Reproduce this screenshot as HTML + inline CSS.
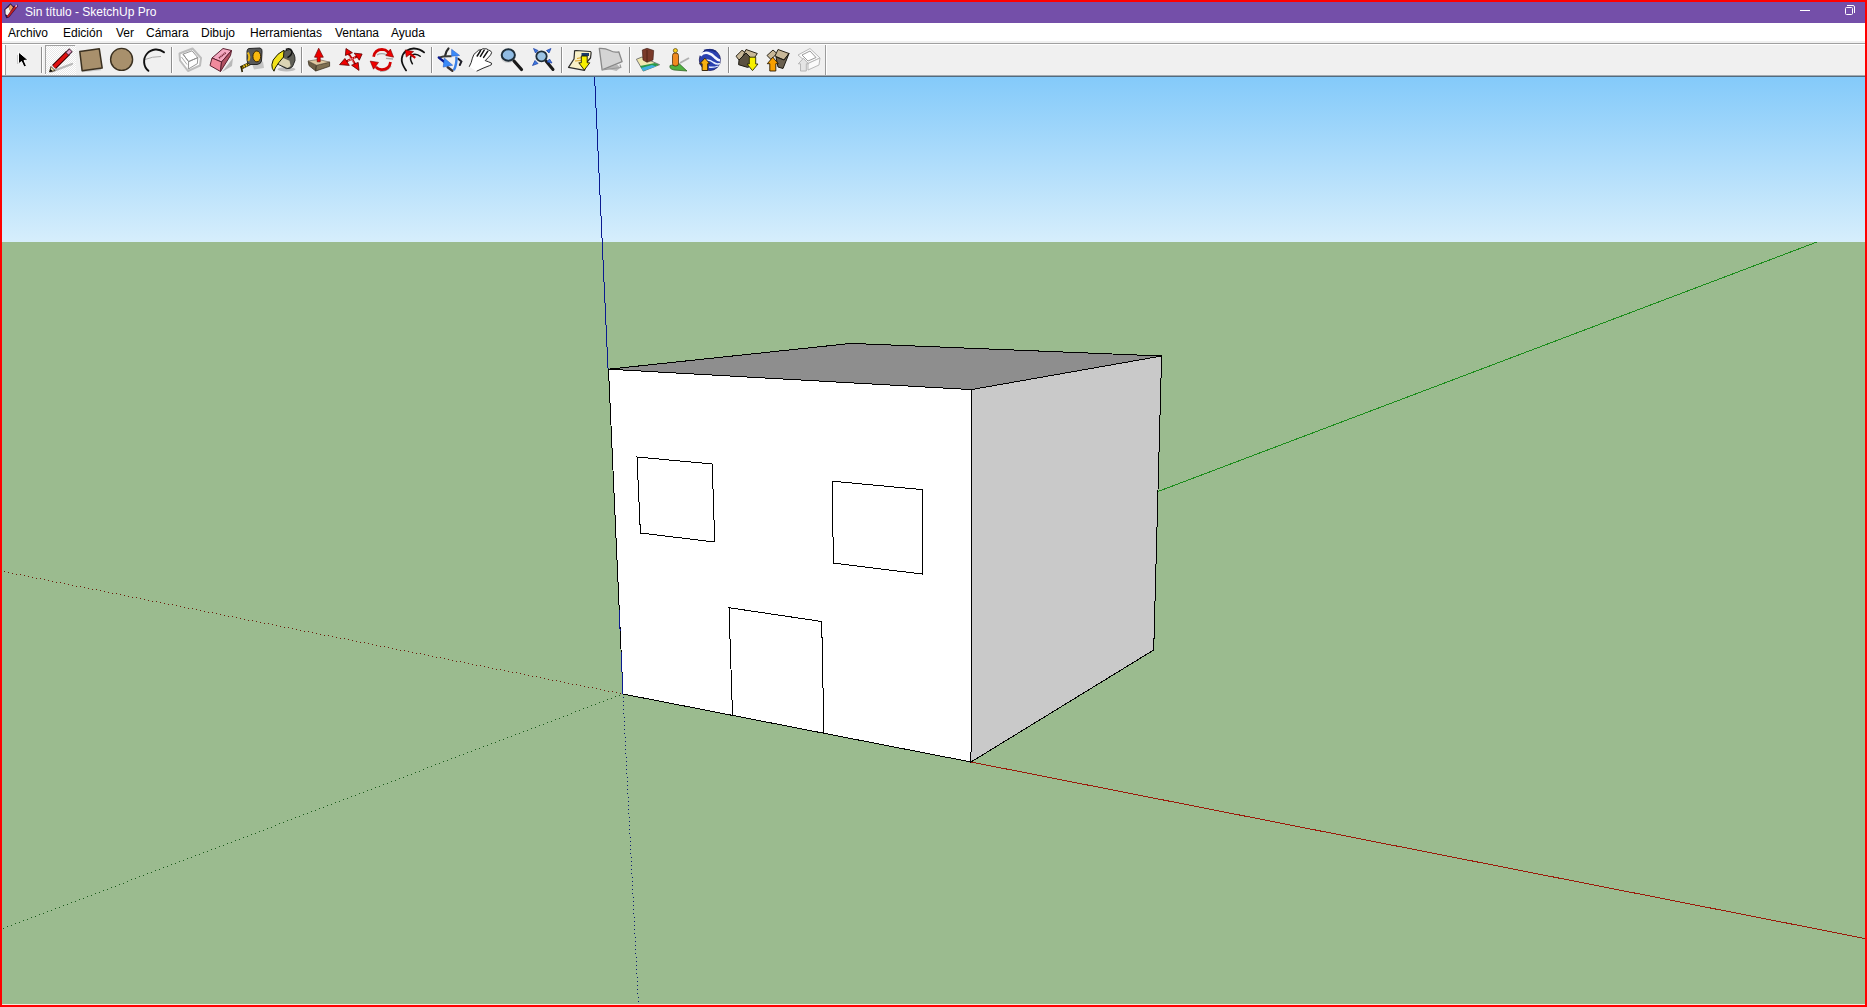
<!DOCTYPE html>
<html><head><meta charset="utf-8">
<style>
*{margin:0;padding:0;box-sizing:border-box}
html,body{width:1867px;height:1007px;overflow:hidden;background:#FF0000;font-family:"Liberation Sans",sans-serif}
.abs{position:absolute}
#title{left:2px;top:2px;width:1863px;height:21px;background:#744FA9}
#title .t{left:23px;top:3px;color:#fff;font-size:12px;white-space:nowrap}
#menu{left:2px;top:23px;width:1863px;height:22px;background:#fff}
#menu .m{top:3px;font-size:12px;color:#000;white-space:nowrap}
#tb{left:2px;top:45px;width:1863px;height:32px;background:#F0F0F0}
#vp{left:2px;top:77px;width:1863px;height:928px;background:#9BBB8F}
</style></head><body>
<div id="title" class="abs">
  <div class="t abs">Sin título - SketchUp Pro</div>
</div>
<svg class="abs" style="left:0;top:0" width="24" height="24" viewBox="0 0 24 24">
<path d="M10.5,3.3 L13.2,6.2 L17.5,4.6 L18,6.2 L9,17.6 L6.3,18.3 L4.8,14.5 L4.3,9.6 Z" fill="#2A1040"/>
<path d="M5.4,9.8 L8.6,6.9 L10.3,11.6 L7.6,15.6 L5.6,14.2 Z" fill="#F4F0EC"/>
<path d="M8.6,6.9 L10.5,4.4 L13,7.3 L10.3,11.6 Z" fill="#F0A060"/>
<path d="M16.6,5.6 L7.6,16.8" stroke="#C02020" stroke-width="2"/>
<path d="M16.8,5.2 L15.6,6.8" stroke="#F0C0E0" stroke-width="1.5"/>
</svg>
<svg class="abs" style="left:1790px;top:0" width="77" height="24" viewBox="1790 0 77 24" shape-rendering="crispEdges">
<rect x="1800" y="10" width="10" height="1" fill="#FFFFFF"/>
<rect x="1845.5" y="7.5" width="7" height="7" rx="1" fill="none" stroke="#FFFFFF" stroke-width="1" shape-rendering="auto"/>
<path d="M1847,5.5 L1853,5.5 Q1854.5,5.5 1854.5,7 L1854.5,13" fill="none" stroke="#FFFFFF" stroke-width="1" shape-rendering="auto"/>
</svg>
<div id="menu" class="abs">
  <div class="abs" style="left:0;top:18px;width:1863px;height:2px;background:#F0F0F0"></div>
  <div class="abs" style="left:0;top:20px;width:1863px;height:1px;background:#A0A0A0"></div>
  <div class="abs" style="left:0;top:21px;width:1863px;height:1px;background:#fff"></div>
  <div class="m abs" style="left:6px">Archivo</div>
  <div class="m abs" style="left:61px">Edición</div>
  <div class="m abs" style="left:114px">Ver</div>
  <div class="m abs" style="left:144px">Cámara</div>
  <div class="m abs" style="left:199px">Dibujo</div>
  <div class="m abs" style="left:248px">Herramientas</div>
  <div class="m abs" style="left:333px">Ventana</div>
  <div class="m abs" style="left:389px">Ayuda</div>
</div>
<div id="tb" class="abs">
  <div class="abs" style="left:0;top:30px;width:1863px;height:1px;background:#A3AAB0"></div>
  <div class="abs" style="left:0;top:31px;width:1863px;height:1px;background:#536B7E"></div>
</div>
<!-- TOOLBAR -->
<svg class="abs" style="left:0;top:0" width="840" height="77" viewBox="0 0 840 77">
<defs>
<pattern id="dith" width="2" height="2" patternUnits="userSpaceOnUse"><rect width="2" height="2" fill="#FFFFFF"/><rect width="1" height="1" fill="#E8E8E8"/><rect x="1" y="1" width="1" height="1" fill="#E8E8E8"/></pattern>
<linearGradient id="gsky" x1="0" y1="0" x2="0" y2="1"><stop offset="0" stop-color="#F8F2D0"/><stop offset="1" stop-color="#F0E0A0"/></linearGradient>
<radialGradient id="globe" cx="0.4" cy="0.35" r="0.7"><stop offset="0" stop-color="#6A9AF0"/><stop offset="1" stop-color="#0A2A8A"/></radialGradient>
</defs>
<!-- gripper + separators -->
<g shape-rendering="crispEdges">
<rect x="3" y="45" width="2" height="30" fill="#FFFFFF"/>
<rect x="5" y="45" width="1" height="30" fill="#9C9C9C"/>
<rect x="41" y="47" width="1" height="26" fill="#8E8E8E"/><rect x="42" y="47" width="1" height="26" fill="#FFFFFF"/>
<rect x="171" y="47" width="1" height="26" fill="#8E8E8E"/><rect x="172" y="47" width="1" height="26" fill="#FFFFFF"/>
<rect x="301" y="47" width="1" height="26" fill="#8E8E8E"/><rect x="302" y="47" width="1" height="26" fill="#FFFFFF"/>
<rect x="431" y="47" width="1" height="26" fill="#8E8E8E"/><rect x="432" y="47" width="1" height="26" fill="#FFFFFF"/>
<rect x="561" y="47" width="1" height="26" fill="#8E8E8E"/><rect x="562" y="47" width="1" height="26" fill="#FFFFFF"/>
<rect x="629" y="47" width="1" height="26" fill="#8E8E8E"/><rect x="630" y="47" width="1" height="26" fill="#FFFFFF"/>
<rect x="728" y="47" width="1" height="26" fill="#8E8E8E"/><rect x="729" y="47" width="1" height="26" fill="#FFFFFF"/>
<rect x="825" y="45" width="1" height="30" fill="#9C9C9C"/><rect x="826" y="45" width="1" height="30" fill="#FFFFFF"/>
<!-- pressed pencil button -->
<rect x="45" y="45" width="31" height="30" fill="url(#dith)"/>
<rect x="45" y="45" width="30" height="1" fill="#A0A0A0"/>
<rect x="45" y="45" width="1" height="29" fill="#A0A0A0"/>
</g>
<!-- select arrow -->
<path d="M18.5,52 L18.5,64 L21.5,61.5 L24,67 L26.5,66 L24,60.5 L28,60 Z" fill="#000" stroke="#FFF" stroke-width="1" stroke-linejoin="miter"/>
<path d="M17.5,55 L17.5,64 L19,62.5" fill="none" stroke="#C8C8C8" stroke-width="1"/>
<!-- pencil -->
<path d="M52,71.5 L72,64" stroke="#B8B8B8" stroke-width="2.2" stroke-linecap="round"/>
<path d="M54,67 L68,53" stroke="#3A0000" stroke-width="5.5"/>
<path d="M54,67 L68,53" stroke="#E01010" stroke-width="3.6"/>
<path d="M67,54 L71,50" stroke="#402030" stroke-width="5"/>
<path d="M67.5,53.5 L70.5,50.5" stroke="#E8A0C8" stroke-width="3"/>
<path d="M49.5,72 L51,66.5 L55,70.5 Z" fill="#F0E8B0" stroke="#302010" stroke-width="0.8"/>
<path d="M49.5,72 L50.4,69 L52.5,71 Z" fill="#000"/>
<!-- rectangle -->
<path d="M82,71.5 L101,69.5" stroke="#C8C8C8" stroke-width="1.5"/>
<path d="M79.8,51.5 L99.3,48.8 L102.2,68.1 L82.1,70.7 Z" fill="#A8906C" stroke="#3A3020" stroke-width="1.5" stroke-linejoin="round"/>
<!-- circle -->
<circle cx="121.6" cy="59.4" r="11" fill="#A8906C" stroke="#3A3020" stroke-width="1.4"/>
<!-- arc -->
<path d="M145,59.5 Q152,56.5 161,56.5" fill="none" stroke="#A0A0A0" stroke-width="0.9"/>
<path d="M164,52.3 A11.6,11.6 0 1 0 148.4,70.8" fill="none" stroke="#111" stroke-width="1.9" stroke-linecap="round"/>
<!-- component -->
<g fill="#FDFDFD" stroke="#BDBDBD" stroke-width="2" stroke-linejoin="round">
<path d="M179.5,53.5 L192.5,48.5 L201,58 L200,65.5 L188,71 L180,60.5 Z"/>
</g>
<g fill="none" stroke="#8A8A8A" stroke-width="0.9" stroke-linejoin="round">
<path d="M183,54.2 L192,50.8 L197.8,57.6 L188.6,61.6 Z" fill="#FFFFFF"/>
<path d="M183,54.2 L188.6,61.6 L188.4,69 M188.6,61.6 L197.8,57.6 L197.4,63.6 L188.4,69"/>
<path d="M181.5,57 L187,64.5" stroke="#A0A0A0"/>
</g>
<!-- eraser -->
<path d="M222,72 L233,58 L232,66 Z" fill="#B8B8B8"/>
<path d="M212,58 L223,48.5 L231.5,50.5 L221.5,62 Z" fill="#F4A8C0" stroke="#5A2030" stroke-width="1"/>
<path d="M212,58 L221.5,62 L220.5,71.5 L210,65.5 Z" fill="#F08A9C" stroke="#5A2030" stroke-width="1"/>
<path d="M221.5,62 L231.5,50.5 L230.5,55.5 L220.5,71.5 Z" fill="#B05060" stroke="#5A2030" stroke-width="1"/>
<path d="M219,58 L226,52.5" stroke="#7A2A3A" stroke-width="1.8" stroke-dasharray="1.2 0.6"/>
<!-- tape -->
<path d="M252,64 L263,61.5 L264,68 L254,69.5 Z" fill="#C4C4C4"/>
<path d="M241,67.8 L251,63" stroke="#2A2000" stroke-width="3.6"/>
<path d="M241,67.8 L251,63" stroke="#F0C818" stroke-width="2.4" stroke-dasharray="1.6 1"/>
<path d="M241,66 L242.3,72" stroke="#2A2000" stroke-width="1.6"/>
<path d="M249,48.5 L260,48 Q262.5,48.5 262,52 L261.5,61 Q261,64 257,64.5 L250,64.5 Q247,64 247,60 L247,51 Q247.5,48.5 249,48.5 Z" fill="#585858" stroke="#262626" stroke-width="1"/>
<ellipse cx="256.8" cy="56.4" rx="3.9" ry="5.4" fill="#F8B810" stroke="#2A1A00" stroke-width="0.9"/>
<path d="M247.8,52.5 Q250.5,56.5 248.3,61" fill="none" stroke="#E8B818" stroke-width="2"/>
<!-- paint bucket -->
<ellipse cx="286.5" cy="69.3" rx="9" ry="2.2" fill="#BDBDBD"/>
<path d="M282,52 L289.5,49.5 Q295.5,53 295,60.5 L292.5,66.5 Q290,69.2 286.5,68.6 L278.5,64.5 Z" fill="#5E5E56" stroke="#262624" stroke-width="1"/>
<path d="M278.8,62.3 L282.6,57.8 L289.5,60.8 L290.6,66 L287.6,68 L279.2,64.2 Z" fill="#DCD4B4"/>
<path d="M285.8,49.5 Q290.5,47.6 292,51.2 Q292.2,55 287.5,57.6" fill="none" stroke="#111" stroke-width="1.5"/>
<path d="M284,50.2 Q277.5,53.2 273.2,60 Q271,65 272.3,68.3 L274,71.2 L275.2,68 Q278,63 283.5,57 Z" fill="#F2E21C" stroke="#1A1A00" stroke-width="1"/>
<!-- push pull -->
<path d="M308.2,61 L316.5,65.2 L315.7,71 L309,65.6 Z" fill="#6E6046" stroke="#3A3020" stroke-width="0.8"/>
<path d="M316.5,65.2 L329.6,62.1 L329.6,66.3 L315.7,71 Z" fill="#7E7052" stroke="#3A3020" stroke-width="0.8"/>
<path d="M308.2,61 L318.4,59.4 L329.6,62.1 L316.5,65.2 Z" fill="#DEC8A0" stroke="#5A5040" stroke-width="0.6"/>
<path d="M318.7,48.2 L323.3,57.2 L320.2,57.2 L320.2,61.8 L317.2,61.8 L317.2,57.2 L314.5,57.2 Z" fill="#EE0000" stroke="#6A0000" stroke-width="0.7"/>
<!-- move -->
<path d="M348.8,54 L356,65.5 M346,61.5 L357,56.5" stroke="#C00000" stroke-width="2.2"/>
<path d="M349.5,56.5 L353.5,62.5 M348.5,60.5 L355,57.8" stroke="#FFFFFF" stroke-width="0.9" stroke-dasharray="1 1"/>
<g fill="#F00000" stroke="#5A0000" stroke-width="0.8" stroke-linejoin="round">
<path d="M346,48.5 L352.4,52.7 L345.4,55.4 Z"/>
<path d="M362.1,54 L359.3,60.2 L354.3,53.2 Z"/>
<path d="M359,70.4 L351.6,65.2 L358.2,62.4 Z"/>
<path d="M339.6,64.6 L344.9,58.5 L349.3,65.4 Z"/>
</g>
<!-- rotate -->
<path d="M377,54.8 Q382,52.3 386.5,54.8" fill="none" stroke="#A8A8A8" stroke-width="1.3"/>
<path d="M386,58.3 L393,59" fill="none" stroke="#A8A8A8" stroke-width="1.3"/>
<path d="M380,71.3 Q387,71.5 391,66" fill="none" stroke="#B0B0B0" stroke-width="1.3"/>
<path d="M373.6,56.8 Q374.8,49.6 382,49.4 Q385.5,49.4 388.3,52.3" fill="none" stroke="#D40000" stroke-width="2.7"/>
<path d="M390.4,49.1 L393.6,57.2 L385.8,55.5 Z" fill="#F00000" stroke="#700000" stroke-width="0.6"/>
<path d="M390.5,62 Q389.5,69.4 382,69.6 Q378.2,69.6 375.8,66.8" fill="none" stroke="#D40000" stroke-width="2.7"/>
<path d="M370.2,61.1 L378.5,62.4 L373.5,69.2 Z" fill="#F00000" stroke="#700000" stroke-width="0.6"/>
<!-- offset -->
<path d="M406.1,70.4 Q401,63 401.8,58.5 Q402.5,53.5 406,51 Q410,48.4 414,48.5 Q420,48.8 424.1,52.4" fill="none" stroke="#111" stroke-width="1.8" stroke-linecap="round"/>
<path d="M412.4,63.8 Q409.5,59 411,56.2 Q412.5,54 415,54.2 Q418,54.4 420.2,56.3" fill="none" stroke="#111" stroke-width="1.5" stroke-linecap="round"/>
<path d="M409.5,53.5 L415.3,57.8" stroke="#D00000" stroke-width="2.2"/>
<path d="M405.2,49.9 L413.6,51.6 L406.3,57.1 Z" fill="#F00000" stroke="#6A0000" stroke-width="0.6"/>
<!-- orbit -->
<path d="M448.5,48.5 Q446,51 445.2,55.5" fill="none" stroke="#2A2A2A" stroke-width="2.2" stroke-linecap="round"/>
<path d="M438.8,57.6 Q444,55.8 451.6,56.3" fill="none" stroke="#3A3A36" stroke-width="2"/>
<path d="M438.8,57.6 L444.5,62" fill="none" stroke="#0A1A90" stroke-width="2.4" stroke-linecap="round"/>
<path d="M458.2,58.8 L461.4,61.6 L459.8,65" fill="none" stroke="#202028" stroke-width="2" stroke-linecap="round"/>
<path d="M447.7,67.3 L452.4,70.8" fill="none" stroke="#3A3232" stroke-width="2.4" stroke-linecap="round"/>
<path d="M456.4,56.5 Q457,64 453.8,70.2" fill="none" stroke="#3A80E8" stroke-width="2.4"/>
<path d="M444.3,58 L443.2,67.1 L452.7,65.2 Z" fill="#3A8AF8" stroke="#1A50C0" stroke-width="0.5"/>
<path d="M451.6,49.3 L459.6,55.4 L451.6,56.2 Z" fill="#3A8AF8" stroke="#1A50C0" stroke-width="0.5"/>
<!-- pan hand -->
<path d="M469.2,66.8 Q471.6,62.5 472.4,58.2 Q473.4,53.6 476.6,52 Q478.6,49.4 481,49.8 Q482.8,48.2 484.8,48.8 Q487,48.4 488.4,50 Q490.8,50.2 491.6,52.6 Q491.2,54.8 488.6,57.2 L485.2,60.6 Q488.4,61.6 491.6,63.2 Q492,65.2 489.6,65.6 Q483,68 476.6,71.2 Z" fill="#FFFFFF"/>
<path d="M469.2,66.8 Q471.6,62.5 472.4,58.2 Q473.4,53.6 476.6,52 Q478.6,49.4 481,49.8 Q482.8,48.2 484.8,48.8 Q487,48.4 488.4,50 Q490.8,50.2 491.6,52.6 Q491.2,54.8 488.6,57.2 L485.2,60.6 Q488.4,61.6 491.6,63.2 Q492,65.2 489.6,65.6 Q483,68 476.6,71.2" fill="none" stroke="#111" stroke-width="0.9" stroke-linejoin="round"/>
<path d="M477.2,56 L480.6,50.6 M480.4,56.4 L484.2,50.2 M483.6,57.4 L487.8,51.2" stroke="#111" stroke-width="1.5" stroke-linecap="round"/>
<!-- zoom -->
<ellipse cx="508" cy="59" rx="6.5" ry="4" fill="#C8C8C8" opacity="0.7"/>
<path d="M514,61 L521.5,69.5" stroke="#1A1A1A" stroke-width="3.2" stroke-linecap="round"/>
<ellipse cx="508.3" cy="55" rx="6.6" ry="5.8" fill="#90BCE4" stroke="#1E2E3A" stroke-width="2"/>
<!-- zoom extents -->
<path d="M546,61 L553,69.5" stroke="#1A1A1A" stroke-width="3" stroke-linecap="round"/>
<ellipse cx="541.5" cy="56.3" rx="5.2" ry="5" fill="#9CC4E4" stroke="#1E2E3A" stroke-width="1.8"/>
<path d="M533.5,48.5 L538,50.5 L535.5,53 Z M551,48.5 L546.5,50.5 L549,53 Z M532.5,65.5 L535,60.5 L538,63.5 Z M552,63 L549.5,59 L547,62 Z" fill="#3A7AE0" stroke="#1A3AA0" stroke-width="0.7"/>
<!-- photo texture -->
<path d="M574.6,51.3 Q574,50.5 576,50.5 L590.5,51.5 Q591.5,52 591,54 L590.5,58 L586.5,62.5 L584.5,70.3 L568.5,67.3 L574,59 Z" fill="#F8F0C8" stroke="#2A2A2A" stroke-width="1.2" stroke-linejoin="round"/>
<rect x="581.5" y="53" width="7.5" height="3" fill="#1A3A6A"/>
<path d="M577,58.5 L582,57.5 M575,61 L581,60.5" stroke="#D8A020" stroke-width="1.2"/>
<path d="M581.3,56 L587.2,56 L587.2,62.8 L589.8,62.8 L584.3,70 L578.8,62.8 L581.3,62.8 Z" fill="#F8F000" stroke="#1A1A00" stroke-width="0.9"/>
<!-- disabled shape -->
<path d="M606,68.5 L617,64.5 L620.5,67.5 L616.5,71 Z" fill="#B8B8B8"/>
<path d="M599.3,48.4 Q605,48 610,50.5 Q614,52.8 618.8,51.8 L622.1,61.6 L602.1,69.9 Z" fill="#D4D4D4" stroke="#888888" stroke-width="1.3" stroke-linejoin="round"/>
<path d="M602.1,69.9 L621,67.5 M620,64.5 L621,68" fill="none" stroke="#9A9A9A" stroke-width="1.1"/>
<!-- building map -->
<path d="M636.4,59.3 L642,57 L659.6,64.7 L643.3,71.1 Z" fill="#F0E8B0" stroke="#5A5A5A" stroke-width="0.8"/>
<path d="M640,66 L655,63 L659,64.7 L643.3,71.1 Z" fill="#2A9A4A"/>
<path d="M641,68 L652,65 L656,66.5 L643.3,71.1 Z" fill="#40B0E0"/>
<path d="M642.3,50 L647,48.3 L653.7,50.5 L653,60 L647,62.3 L643,60 Z" fill="#7A3A2A" stroke="#3A1A10" stroke-width="0.6"/>
<path d="M647,50 L647,62" stroke="#4A2010" stroke-width="0.8"/>
<!-- person -->
<path d="M680,63 L689,58" stroke="#B0B0B0" stroke-width="2"/>
<path d="M670,65.5 Q669,69 674,70 L687,71 L679,63.5 Z" fill="#50B040" stroke="#2A5A20" stroke-width="0.7"/>
<rect x="672.5" y="53" width="6" height="13" rx="2.5" fill="#F08A20" stroke="#3A2000" stroke-width="0.7"/>
<circle cx="675.4" cy="50.6" r="2.1" fill="#F8D020" stroke="#3A2A00" stroke-width="0.6"/>
<!-- earth -->
<circle cx="709.9" cy="59.9" r="10.6" fill="#2A40B0" stroke="#202060" stroke-width="0.8"/>
<path d="M700.2,55.5 Q703.5,52 708,53 Q712,54 715,57.5 Q718,60.5 720.3,60.5" fill="none" stroke="#F4F6FF" stroke-width="2.6"/>
<path d="M706,60 Q710,59.5 713.5,62.5 Q717,65 720,63.5" fill="none" stroke="#E8EEFF" stroke-width="1.6"/>
<path d="M709,67 Q713,67.8 718.5,66" fill="none" stroke="#E0E8FF" stroke-width="1.3"/>
<path d="M704,50.5 Q710,48.5 716,51.5" fill="none" stroke="#1A2A80" stroke-width="1.5"/>
<path d="M704.9,58.2 L709.8,63.7 L707.7,63.7 L707.7,70.5 L702.1,70.5 L702.1,63.7 L699.6,64 Z" fill="#F8B010" stroke="#2A1A00" stroke-width="0.9"/>
<!-- warehouse download -->
<path d="M736,56.2 L742,50.3 L746,53 L739,60 Z" fill="#C8B898" stroke="#2A2418" stroke-width="1"/>
<path d="M746,49.5 L757.3,53.5 L753,60 L743,56 Z" fill="#C8B898" stroke="#2A2418" stroke-width="1"/>
<path d="M739,60 L746,53 L753,60 L753,65 L747.7,67.4 L738.6,64.7 Z" fill="#5A5040" stroke="#1A1810" stroke-width="1"/>
<path d="M749.3,57.2 L755.7,57.2 L755.7,64 L758,64 L752.5,70.6 L747,64 L749.3,64 Z" fill="#F8F000" stroke="#2A2A00" stroke-width="0.9"/>
<!-- warehouse upload -->
<path d="M767,55.5 L773,50 L777,53.5 L771,59.5 Z" fill="#C8B898" stroke="#2A2418" stroke-width="1"/>
<path d="M778,49.5 L789,53.5 L784,60 L775,56 Z" fill="#C8B898" stroke="#2A2418" stroke-width="1"/>
<path d="M776,57 L784,60 L789,53.5 L783,68.5 L778,67 Z" fill="#6A6050" stroke="#1A1810" stroke-width="1"/>
<path d="M772.8,57.2 L778.3,63.7 L775.8,63.7 L775.8,71 L769.8,71 L769.8,63.7 L767.3,63.7 Z" fill="#F8A000" stroke="#2A1A00" stroke-width="0.9"/>
<!-- warehouse disabled -->
<g fill="#FAFAFA" stroke="#B8B8B8" stroke-width="1" stroke-linejoin="round">
<path d="M798,55 L810,48.5 L820,58 L808,63.5 Z"/>
<path d="M808,63.5 L820,58 L819,65 L808,70 Z"/>
<path d="M802,55 L810,51 L816,57.5 L808,61 Z" fill="#FFFFFF" stroke="#9A9A9A"/>
</g>
<path d="M803.4,58.3 L808.5,63.8 L806.3,63.8 L806.3,71 L800.5,71 L800.5,63.8 L798.3,63.8 Z" fill="#E4E4E4" stroke="#B0B0B0" stroke-width="0.9"/>
</svg>
<!-- /TOOLBAR -->
<div id="vp" class="abs">
  <div class="abs" style="left:0;top:0;width:1863px;height:165px;background:linear-gradient(#84CAFA,#D6EEFC)"></div>
  <div class="abs" style="left:0;top:927px;width:1863px;height:1px;background:#F6E6DC"></div>
</div>
<svg class="abs" style="left:0;top:0" width="1867" height="1007" viewBox="0 0 1867 1007">
<defs><clipPath id="vpc"><rect x="3" y="77" width="1862" height="927"/></clipPath></defs>
<g clip-path="url(#vpc)" shape-rendering="crispEdges" fill="none" stroke-width="1">
<line x1="623" y1="694" x2="1817" y2="242" stroke="#1A8C1A"/>
<line x1="971" y1="762" x2="1870" y2="939.5" stroke="#9A1A0A"/>
<path d="M620,693h1v1h-1zM616,692h1v1h-1zM612,691h1v1h-1zM608,691h1v1h-1zM604,690h1v1h-1zM600,689h1v1h-1zM596,688h1v1h-1zM592,687h1v1h-1zM588,687h1v1h-1zM584,686h1v1h-1zM580,685h1v1h-1zM576,684h1v1h-1zM572,684h1v1h-1zM568,683h1v1h-1zM564,682h1v1h-1zM560,681h1v1h-1zM556,680h1v1h-1zM552,680h1v1h-1zM548,679h1v1h-1zM544,678h1v1h-1zM540,677h1v1h-1zM536,676h1v1h-1zM532,676h1v1h-1zM528,675h1v1h-1zM524,674h1v1h-1zM520,673h1v1h-1zM516,672h1v1h-1zM512,672h1v1h-1zM508,671h1v1h-1zM504,670h1v1h-1zM500,669h1v1h-1zM496,669h1v1h-1zM492,668h1v1h-1zM488,667h1v1h-1zM484,666h1v1h-1zM480,665h1v1h-1zM476,665h1v1h-1zM472,664h1v1h-1zM468,663h1v1h-1zM464,662h1v1h-1zM460,661h1v1h-1zM456,661h1v1h-1zM452,660h1v1h-1zM448,659h1v1h-1zM444,658h1v1h-1zM440,657h1v1h-1zM436,657h1v1h-1zM432,656h1v1h-1zM428,655h1v1h-1zM424,654h1v1h-1zM420,653h1v1h-1zM416,653h1v1h-1zM412,652h1v1h-1zM408,651h1v1h-1zM404,650h1v1h-1zM400,650h1v1h-1zM396,649h1v1h-1zM392,648h1v1h-1zM388,647h1v1h-1zM384,646h1v1h-1zM380,646h1v1h-1zM376,645h1v1h-1zM372,644h1v1h-1zM368,643h1v1h-1zM364,642h1v1h-1zM360,642h1v1h-1zM356,641h1v1h-1zM352,640h1v1h-1zM348,639h1v1h-1zM344,638h1v1h-1zM340,638h1v1h-1zM336,637h1v1h-1zM332,636h1v1h-1zM328,635h1v1h-1zM324,635h1v1h-1zM320,634h1v1h-1zM316,633h1v1h-1zM312,632h1v1h-1zM308,631h1v1h-1zM304,631h1v1h-1zM300,630h1v1h-1zM296,629h1v1h-1zM292,628h1v1h-1zM288,627h1v1h-1zM284,627h1v1h-1zM280,626h1v1h-1zM276,625h1v1h-1zM272,624h1v1h-1zM268,623h1v1h-1zM264,623h1v1h-1zM260,622h1v1h-1zM256,621h1v1h-1zM252,620h1v1h-1zM248,620h1v1h-1zM244,619h1v1h-1zM240,618h1v1h-1zM236,617h1v1h-1zM232,616h1v1h-1zM228,616h1v1h-1zM224,615h1v1h-1zM220,614h1v1h-1zM216,613h1v1h-1zM212,612h1v1h-1zM208,612h1v1h-1zM204,611h1v1h-1zM200,610h1v1h-1zM196,609h1v1h-1zM192,608h1v1h-1zM188,608h1v1h-1zM184,607h1v1h-1zM180,606h1v1h-1zM176,605h1v1h-1zM172,604h1v1h-1zM168,604h1v1h-1zM164,603h1v1h-1zM160,602h1v1h-1zM156,601h1v1h-1zM152,601h1v1h-1zM148,600h1v1h-1zM144,599h1v1h-1zM140,598h1v1h-1zM136,597h1v1h-1zM132,597h1v1h-1zM128,596h1v1h-1zM124,595h1v1h-1zM120,594h1v1h-1zM116,593h1v1h-1zM112,593h1v1h-1zM108,592h1v1h-1zM104,591h1v1h-1zM100,590h1v1h-1zM96,589h1v1h-1zM92,589h1v1h-1zM88,588h1v1h-1zM84,587h1v1h-1zM80,586h1v1h-1zM76,586h1v1h-1zM72,585h1v1h-1zM68,584h1v1h-1zM64,583h1v1h-1zM60,582h1v1h-1zM56,582h1v1h-1zM52,581h1v1h-1zM48,580h1v1h-1zM44,579h1v1h-1zM40,578h1v1h-1zM36,578h1v1h-1zM32,577h1v1h-1zM28,576h1v1h-1zM24,575h1v1h-1zM20,574h1v1h-1zM16,574h1v1h-1zM12,573h1v1h-1zM8,572h1v1h-1zM4,571h1v1h-1z" fill="#6A1A0A"/>
<path d="M619,695h1v1h-1zM615,696h1v1h-1zM611,698h1v1h-1zM607,699h1v1h-1zM603,701h1v1h-1zM599,702h1v1h-1zM595,704h1v1h-1zM591,705h1v1h-1zM587,707h1v1h-1zM583,708h1v1h-1zM579,710h1v1h-1zM575,711h1v1h-1zM571,713h1v1h-1zM567,715h1v1h-1zM563,716h1v1h-1zM559,718h1v1h-1zM555,719h1v1h-1zM551,721h1v1h-1zM547,722h1v1h-1zM543,724h1v1h-1zM539,725h1v1h-1zM535,727h1v1h-1zM531,728h1v1h-1zM527,730h1v1h-1zM523,731h1v1h-1zM519,733h1v1h-1zM515,734h1v1h-1zM511,736h1v1h-1zM507,737h1v1h-1zM503,739h1v1h-1zM499,740h1v1h-1zM495,742h1v1h-1zM491,743h1v1h-1zM487,745h1v1h-1zM483,746h1v1h-1zM479,748h1v1h-1zM475,749h1v1h-1zM471,751h1v1h-1zM467,752h1v1h-1zM463,754h1v1h-1zM459,755h1v1h-1zM455,757h1v1h-1zM451,758h1v1h-1zM447,760h1v1h-1zM443,761h1v1h-1zM439,763h1v1h-1zM435,764h1v1h-1zM431,766h1v1h-1zM427,767h1v1h-1zM423,769h1v1h-1zM419,771h1v1h-1zM415,772h1v1h-1zM411,774h1v1h-1zM407,775h1v1h-1zM403,777h1v1h-1zM399,778h1v1h-1zM395,780h1v1h-1zM391,781h1v1h-1zM387,783h1v1h-1zM383,784h1v1h-1zM379,786h1v1h-1zM375,787h1v1h-1zM371,789h1v1h-1zM367,790h1v1h-1zM363,792h1v1h-1zM359,793h1v1h-1zM355,795h1v1h-1zM351,796h1v1h-1zM347,798h1v1h-1zM343,799h1v1h-1zM339,801h1v1h-1zM335,802h1v1h-1zM331,804h1v1h-1zM327,805h1v1h-1zM323,807h1v1h-1zM319,808h1v1h-1zM315,810h1v1h-1zM311,811h1v1h-1zM307,813h1v1h-1zM303,814h1v1h-1zM299,816h1v1h-1zM295,817h1v1h-1zM291,819h1v1h-1zM287,820h1v1h-1zM283,822h1v1h-1zM279,823h1v1h-1zM275,825h1v1h-1zM271,827h1v1h-1zM267,828h1v1h-1zM263,830h1v1h-1zM259,831h1v1h-1zM255,833h1v1h-1zM251,834h1v1h-1zM247,836h1v1h-1zM243,837h1v1h-1zM239,839h1v1h-1zM235,840h1v1h-1zM231,842h1v1h-1zM227,843h1v1h-1zM223,845h1v1h-1zM219,846h1v1h-1zM215,848h1v1h-1zM211,849h1v1h-1zM207,851h1v1h-1zM203,852h1v1h-1zM199,854h1v1h-1zM195,855h1v1h-1zM191,857h1v1h-1zM187,858h1v1h-1zM183,860h1v1h-1zM179,861h1v1h-1zM175,863h1v1h-1zM171,864h1v1h-1zM167,866h1v1h-1zM163,867h1v1h-1zM159,869h1v1h-1zM155,870h1v1h-1zM151,872h1v1h-1zM147,873h1v1h-1zM143,875h1v1h-1zM139,876h1v1h-1zM135,878h1v1h-1zM131,879h1v1h-1zM127,881h1v1h-1zM123,883h1v1h-1zM119,884h1v1h-1zM115,886h1v1h-1zM111,887h1v1h-1zM107,889h1v1h-1zM103,890h1v1h-1zM99,892h1v1h-1zM95,893h1v1h-1zM91,895h1v1h-1zM87,896h1v1h-1zM83,898h1v1h-1zM79,899h1v1h-1zM75,901h1v1h-1zM71,902h1v1h-1zM67,904h1v1h-1zM63,905h1v1h-1zM59,907h1v1h-1zM55,908h1v1h-1zM51,910h1v1h-1zM47,911h1v1h-1zM43,913h1v1h-1zM39,914h1v1h-1zM35,916h1v1h-1zM31,917h1v1h-1zM27,919h1v1h-1zM23,920h1v1h-1zM19,922h1v1h-1zM15,923h1v1h-1zM11,925h1v1h-1zM7,926h1v1h-1zM3,928h1v1h-1z" fill="#1A5A1A"/>
<path d="M623,697h1v1h-1zM623,701h1v1h-1zM623,705h1v1h-1zM623,709h1v1h-1zM623,713h1v1h-1zM624,717h1v1h-1zM624,721h1v1h-1zM624,725h1v1h-1zM624,729h1v1h-1zM624,733h1v1h-1zM625,737h1v1h-1zM625,741h1v1h-1zM625,745h1v1h-1zM625,749h1v1h-1zM625,753h1v1h-1zM626,757h1v1h-1zM626,761h1v1h-1zM626,765h1v1h-1zM626,769h1v1h-1zM626,773h1v1h-1zM627,777h1v1h-1zM627,781h1v1h-1zM627,785h1v1h-1zM627,789h1v1h-1zM627,793h1v1h-1zM628,797h1v1h-1zM628,801h1v1h-1zM628,805h1v1h-1zM628,809h1v1h-1zM628,813h1v1h-1zM629,817h1v1h-1zM629,821h1v1h-1zM629,825h1v1h-1zM629,829h1v1h-1zM629,833h1v1h-1zM630,837h1v1h-1zM630,841h1v1h-1zM630,845h1v1h-1zM630,849h1v1h-1zM630,853h1v1h-1zM631,857h1v1h-1zM631,861h1v1h-1zM631,865h1v1h-1zM631,869h1v1h-1zM631,873h1v1h-1zM632,877h1v1h-1zM632,881h1v1h-1zM632,885h1v1h-1zM632,889h1v1h-1zM632,893h1v1h-1zM633,897h1v1h-1zM633,901h1v1h-1zM633,905h1v1h-1zM633,909h1v1h-1zM633,913h1v1h-1zM634,917h1v1h-1zM634,921h1v1h-1zM634,925h1v1h-1zM634,929h1v1h-1zM634,933h1v1h-1zM635,937h1v1h-1zM635,941h1v1h-1zM635,945h1v1h-1zM635,949h1v1h-1zM635,953h1v1h-1zM636,957h1v1h-1zM636,961h1v1h-1zM636,965h1v1h-1zM636,969h1v1h-1zM636,973h1v1h-1zM637,977h1v1h-1zM637,981h1v1h-1zM637,985h1v1h-1zM637,989h1v1h-1zM637,993h1v1h-1zM638,997h1v1h-1zM638,1001h1v1h-1z" fill="#0A1A70"/>
<polygon points="608.5,369.2 851,343.4 1161.6,356 971.5,389.6" fill="#8E8E8E" stroke="#000"/>
<polygon points="971.5,389.6 1161.6,356 1153.7,650 971,762" fill="#C9C9C9" stroke="#000"/>
<polygon points="608.5,369.2 971.5,389.6 971,762 623,694" fill="#FFFFFF" stroke="#000"/>
<polygon points="637.0,457.0 712.2,464.0 714.7,542 640.4,533" stroke="#000"/>
<polygon points="832.2,481.2 922.2,489.6 922.5,574.1 833.4,563.1" stroke="#000"/>
<polyline points="732.5,714.8 729.0,607.7 821.7,621.5 823.9,733.2" stroke="#000"/>
<line x1="594.6" y1="77" x2="608.05" y2="369.2" stroke="#0A1A90"/>
<line x1="619.13" y1="610" x2="620.10" y2="631" stroke="#0A1A90"/>
<line x1="621.07" y1="652" x2="623" y2="694" stroke="#0A1A90"/>
</g>
</svg>
</body></html>
